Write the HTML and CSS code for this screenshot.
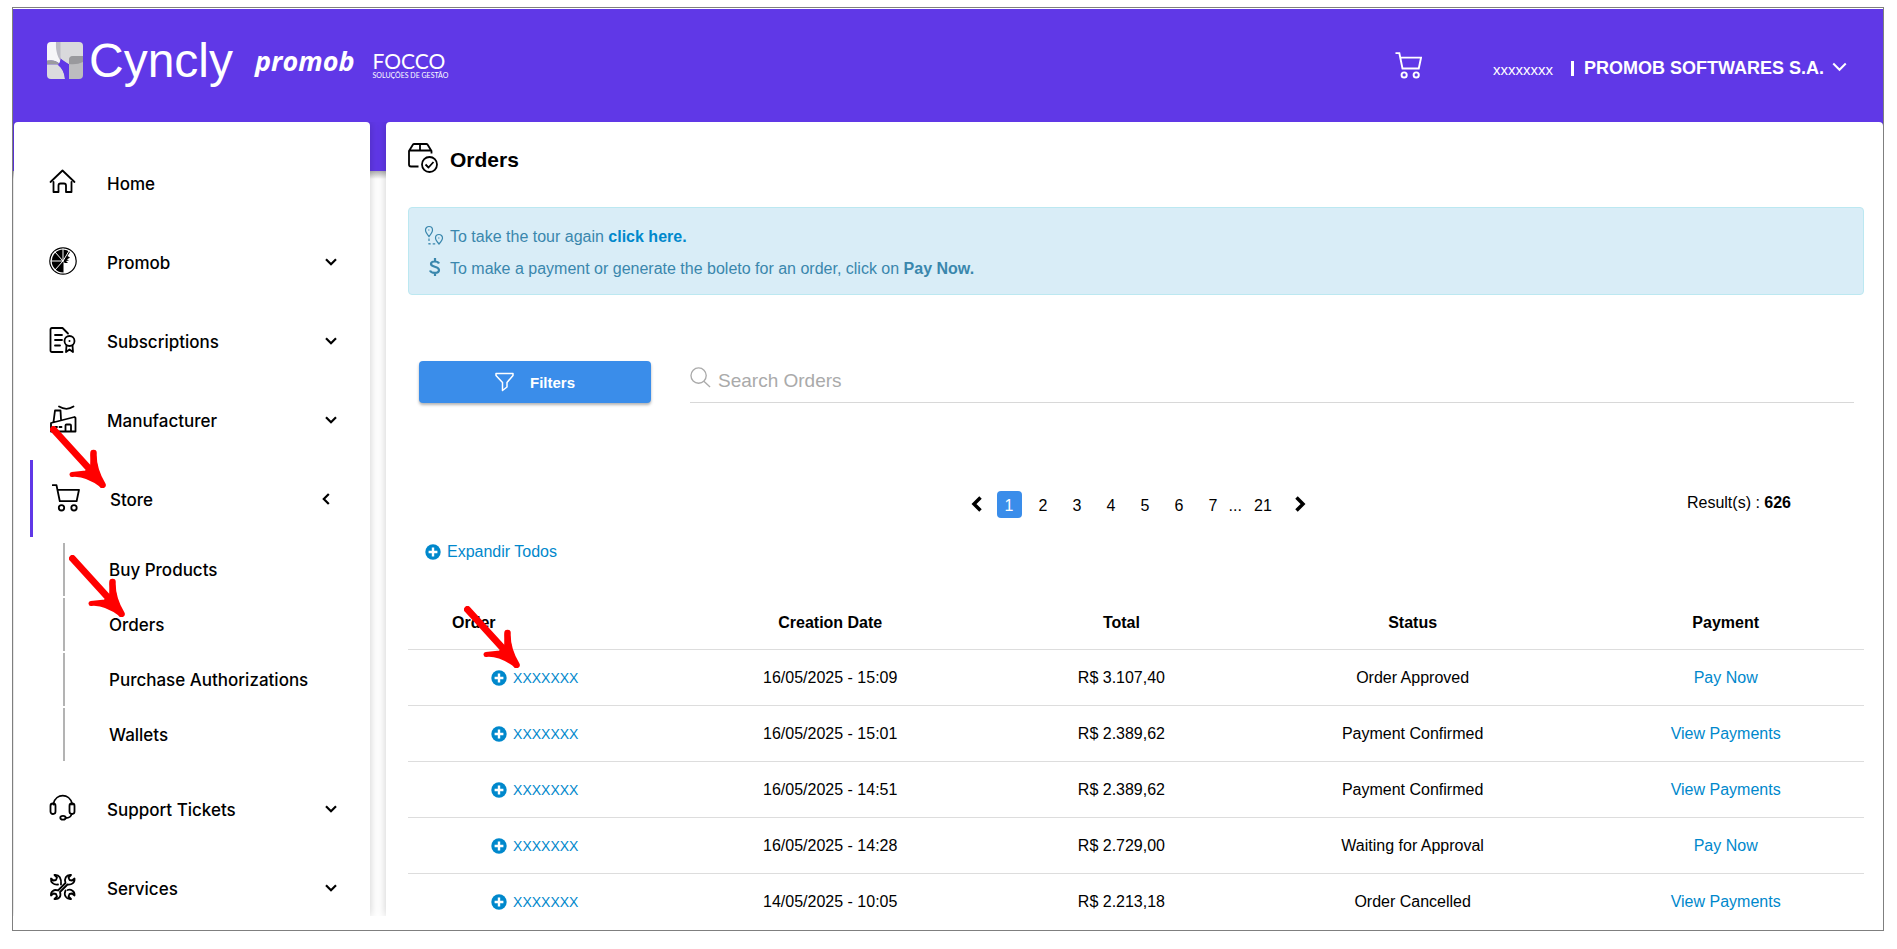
FILE: index.html
```html
<!DOCTYPE html>
<html lang="en">
<head>
    <meta charset="UTF-8">
    <meta name="viewport" content="width=device-width, initial-scale=1.0">
    <title>Orders</title>
    <link rel="stylesheet" href="styles.css">
</head>
<body>
    <!-- shared icons -->
    <svg class="sprite" aria-hidden="true">
        <symbol id="cart" viewBox="0 0 28 28">
            <path d="M0.5 1.2H4.5L7.8 17.2H24.6L27 5.8H5.6"/>
            <circle cx="9.5" cy="23.8" r="2.7"/>
            <circle cx="22" cy="23.8" r="2.7"/>
        </symbol>
        <symbol id="chevron" viewBox="0 0 12 8">
            <path d="M1 1.2L6 6.2L11 1.2"/>
        </symbol>
        <symbol id="plus" viewBox="0 0 16 16">
            <circle cx="8" cy="8" r="7.7"/>
            <path d="M8 3.6V12.4M3.6 8H12.4" stroke="#fff" stroke-width="2.4"/>
        </symbol>
        <symbol id="arrow" viewBox="0 0 56 62">
            <path d="M3.5 3.5L44 48" stroke-width="7" fill="none"/>
            <path d="M22 48.500C31 47.500 41 51 52.500 59.500C46.500 49 43.500 39 43.500 26.500L42.500 41L36 47Z" stroke-width="5"/>
            <path d="M43.500 27C43 37 45.500 47 52.500 59" stroke-width="6.500" fill="none"/>
        </symbol>
    </svg>

    <div class="frame">
        <header class="topbar">
            <div class="brand">
                <svg class="brand-icon" viewBox="0 0 36 37">
                    <path d="M4 0H13V12L13.500 22C8 18 4 18 0 19V4Q0 0 4 0Z" fill="#f6f6f8"/>
                    <path d="M9 0H32Q36 0 36 4V22H21C14 19 9 12 9 0Z" fill="#d9d9dc"/>
                    <path d="M9 0H13.500V19C10 14 8.500 7 9 0Z" fill="#bbbbc4"/>
                    <path d="M0 18.500C6 17.500 10 19 13 22.500H0Z" fill="#9a9a9f"/>
                    <path d="M0 22.500H10.500C15 26 17.500 31 18 37H4Q0 37 0 33Z" fill="#dbdbde"/>
                    <path d="M22 18Q22 14 26 14H36V33Q36 37 32 37H22Z" fill="#bcbcbf"/>
                    <path d="M22 18Q22 14 26 14H36V20Q30 23 22 22Z" fill="#99999d"/>
                    <path d="M14 17L21.500 22V37H18C17.500 31 15.500 26 11.500 23Z" fill="#6038e7"/>
                </svg>
                <span class="cyncly">Cyncly</span>
                <span class="promob">promob</span>
                <span class="focco">FOCCO<small>SOLUÇÕES DE GESTÃO</small></span>
            </div>
            <div class="account">
                <a href="#" class="cart-link" aria-label="Cart"><svg class="cart-icon"><use href="#cart"/></svg></a>
                <span class="user">xxxxxxxx</span>
                <button type="button" class="company">
                    <span class="divider"></span>
                    PROMOB SOFTWARES S.A.
                    <svg class="company-chevron"><use href="#chevron"/></svg>
                </button>
            </div>
        </header>

        <div class="page">
            <nav class="sidebar">
                <a href="#" class="item">
                    <svg class="item-icon" viewBox="0 0 28 28">
                        <path d="M1.500 14L13.500 2.500L25.500 14M4.500 14V24H9.500V17.500Q9.500 15.500 11.500 15.500H15Q17 15.500 17 17.500V24H22.500V14"/>
                    </svg>
                    <span class="item-text">Home</span>
                </a>
                <a href="#" class="item">
                    <svg class="item-icon" viewBox="0 0 28 28">
                        <circle cx="14" cy="14" r="13.200" stroke-width="1.200"/>
                        <path d="M14 14V2.500A11.500 11.500 0 0 1 21 5L18.500 9L21 10.500L18 12.500L20 13.500L17 14L19 16L16 16L14.500 15V25.500A11.500 11.500 0 0 1 14 2.500Z" fill="#000" stroke="none"/>
                        <path d="M14 14V2M14 14L20 4M14 14L6 5M14 14H2M14 14L6 23" stroke="#fff" stroke-width="1"/>
                    </svg>
                    <span class="item-text">Promob</span>
                    <svg class="item-chevron"><use href="#chevron"/></svg>
                </a>
                <a href="#" class="item">
                    <svg class="item-icon" viewBox="0 0 28 28">
                        <path d="M13.500 26H3Q1.500 26 1.500 24.500V3.500Q1.500 2 3 2H13.500L19 7.500M6 9H13M6 14H13M6 19.500H11"/>
                        <circle cx="20.500" cy="15" r="5"/>
                        <circle cx="20.500" cy="15" r="1" fill="#000" stroke="none"/>
                        <path d="M17.500 19.500L17 26L20.500 23.500L24 26L23.500 19.500"/>
                    </svg>
                    <span class="item-text">Subscriptions</span>
                    <svg class="item-chevron"><use href="#chevron"/></svg>
                </a>
                <a href="#" class="item">
                    <svg class="item-icon" viewBox="0 0 28 28">
                        <path d="M10 1.500C15 4.500 20 4.500 24.500 1.500M4.500 17L6 5.500H11.500L12 14.500M2 26.500V18L25.500 12L26.500 13V26.500Z"/>
                        <path d="M6 22H8M10.500 22H12.500M16.500 26V20.500Q16.500 19.500 17.500 19.500H21Q22 19.500 22 20.500V26"/>
                    </svg>
                    <span class="item-text">Manufacturer</span>
                    <svg class="item-chevron"><use href="#chevron"/></svg>
                </a>
                <a href="#" class="item active">
                    <svg class="item-icon"><use href="#cart"/></svg>
                    <span class="item-text">Store</span>
                    <svg class="item-chevron"><use href="#chevron"/></svg>
                    <svg class="arrow arrow-store"><use href="#arrow"/></svg>
                </a>
                <div class="submenu">
                    <a href="#" class="subitem">Buy Products</a>
                    <a href="#" class="subitem">Orders
                        <svg class="arrow arrow-orders"><use href="#arrow"/></svg>
                    </a>
                    <a href="#" class="subitem">Purchase Authorizations</a>
                    <a href="#" class="subitem">Wallets</a>
                </div>
                <a href="#" class="item">
                    <svg class="item-icon" viewBox="0 0 28 28">
                        <path d="M4.500 10.500V9.500C7 -1 20.500 -1 23 9.500V10.500M22.500 20Q22 24 16.500 24"/>
                        <rect x="1.500" y="9.500" width="5" height="10.500" rx="2.400"/>
                        <rect x="20.500" y="9.500" width="5" height="10.500" rx="2.400"/>
                        <ellipse cx="14" cy="23.800" rx="2.700" ry="1.900"/>
                    </svg>
                    <span class="item-text">Support Tickets</span>
                    <svg class="item-chevron"><use href="#chevron"/></svg>
                </a>
                <a href="#" class="item">
                    <svg class="item-icon" viewBox="0 0 28 28">
                        <path d="M9 17.500L16.500 10C15 6 17 1.500 22 2L19.500 4.500L20.500 7L23 7.500L25.500 5.500C26 10 22.500 12 18.500 11.500L11 19C12.500 23.500 10 26.500 5.500 26L8 23.500L7 21L4.500 20.500L2 22.500C1.500 18.500 5 16 9 17.500Z"/>
                        <path d="M12 11.500C12.500 5.500 10.500 1.500 5.500 2L8 4.500L7 7L4.500 7.500L2 5.500C1.500 9.500 4.500 12 9 11.500M16.500 17.500C14.500 22 17 26.500 22 26L19.500 23.500L20.500 21L23 20.500L25.500 22.500C26 18 22 16 18.500 17"/>
                    </svg>
                    <span class="item-text">Services</span>
                    <svg class="item-chevron"><use href="#chevron"/></svg>
                </a>
            </nav>

            <main class="panel">
                <h1 class="title">
                    <svg class="title-icon" viewBox="0 0 30 30">
                        <path d="M10.500 23.500H3Q1 23.500 1 21.500V8L5 1.500Q5.500 1 6 1H18.500Q19 1 19.500 1.500L23.500 8V10.500M1 7.500H23.500M12 1V7.500"/>
                        <circle cx="21.500" cy="21.500" r="7.500"/>
                        <path d="M17.500 21.500L20.500 24.500L25.500 19"/>
                    </svg>
                    Orders
                </h1>

                <div class="alert">
                    <p>
                        <svg class="alert-icon" viewBox="0 0 20 20" stroke-width="1.200">
                            <path d="M5 11.500C2 8 1.500 6.500 1.500 5A3.500 3.500 0 0 1 8.500 5C8.500 6.500 8 8 5 11.500ZM15 19C12 15.500 11.500 14.500 11.500 13A3.500 3.500 0 0 1 18.500 13C18.500 14.500 18 15.500 15 19Z"/>
                            <path d="M4.800 4.500V5.500M14.800 12.500V13.500"/>
                            <path d="M5 13.500V18.800H13" stroke-dasharray="2.500 2"/>
                        </svg>
                        <span>To take the tour again <a href="#">click here.</a></span>
                    </p>
                    <p>
                        <svg class="alert-icon" viewBox="0 0 20 20" stroke-width="2.200">
                            <path d="M15 6.500C14 4 7 3.500 7 7C7 10.500 15 9 15 13C15 17 7 16.500 6 13.500M11 1V4M11 16V19"/>
                        </svg>
                        <span>To make a payment or generate the boleto for an order, click on <b>Pay Now.</b></span>
                    </p>
                </div>

                <div class="tools">
                    <button type="button" class="filters">
                        <svg class="filters-icon" viewBox="0 0 19 20">
                            <path d="M1 1.500H18V3.500L12 10.500V15L7.500 18.500V10.500L1 3.500Z"/>
                        </svg>
                        Filters
                    </button>
                    <label class="search">
                        <svg class="search-icon" viewBox="0 0 22 22">
                            <circle cx="9" cy="9" r="8"/>
                            <path d="M14.500 15L21 21"/>
                        </svg>
                        <input type="text" placeholder="Search Orders" aria-label="Search Orders">
                    </label>
                </div>

                <div class="results">
                    <ul class="pagination">
                        <li class="prev"><a href="#" aria-label="Previous"><svg viewBox="0 0 11 16"><path d="M9.500 1.500L3 8L9.500 14.500"/></svg></a></li>
                        <li class="current"><a href="#">1</a></li>
                        <li><a href="#">2</a></li>
                        <li><a href="#">3</a></li>
                        <li><a href="#">4</a></li>
                        <li><a href="#">5</a></li>
                        <li><a href="#">6</a></li>
                        <li><a href="#">7</a></li>
                        <li class="dots">...</li>
                        <li><a href="#">21</a></li>
                        <li class="next"><a href="#" aria-label="Next"><svg viewBox="0 0 11 16"><path d="M1.500 1.500L8 8L1.500 14.500"/></svg></a></li>
                    </ul>
                    <p class="count">Result(s) : <b>626</b></p>
                </div>

                <a href="#" class="expand"><svg class="plus"><use href="#plus"/></svg>Expandir Todos</a>

                <table class="orders">
                    <thead>
                        <tr>
                            <th class="col-order">Order</th>
                            <th class="col-date">Creation Date</th>
                            <th class="col-total">Total</th>
                            <th class="col-status">Status</th>
                            <th class="col-payment">Payment</th>
                        </tr>
                    </thead>
                    <tbody>
                        <tr>
                            <td class="first"><a href="#" class="order"><svg class="plus"><use href="#plus"/></svg>XXXXXXX</a>
                                <svg class="arrow arrow-row"><use href="#arrow"/></svg></td>
                            <td>16/05/2025 - 15:09</td>
                            <td>R$ 3.107,40</td>
                            <td>Order Approved</td>
                            <td><a href="#">Pay Now</a></td>
                        </tr>
                        <tr>
                            <td><a href="#" class="order"><svg class="plus"><use href="#plus"/></svg>XXXXXXX</a></td>
                            <td>16/05/2025 - 15:01</td>
                            <td>R$ 2.389,62</td>
                            <td>Payment Confirmed</td>
                            <td><a href="#">View Payments</a></td>
                        </tr>
                        <tr>
                            <td><a href="#" class="order"><svg class="plus"><use href="#plus"/></svg>XXXXXXX</a></td>
                            <td>16/05/2025 - 14:51</td>
                            <td>R$ 2.389,62</td>
                            <td>Payment Confirmed</td>
                            <td><a href="#">View Payments</a></td>
                        </tr>
                        <tr>
                            <td><a href="#" class="order"><svg class="plus"><use href="#plus"/></svg>XXXXXXX</a></td>
                            <td>16/05/2025 - 14:28</td>
                            <td>R$ 2.729,00</td>
                            <td>Waiting for Approval</td>
                            <td><a href="#">Pay Now</a></td>
                        </tr>
                        <tr>
                            <td><a href="#" class="order"><svg class="plus"><use href="#plus"/></svg>XXXXXXX</a></td>
                            <td>14/05/2025 - 10:05</td>
                            <td>R$ 2.213,18</td>
                            <td>Order Cancelled</td>
                            <td><a href="#">View Payments</a></td>
                        </tr>
                    </tbody>
                </table>
            </main>
        </div>
    </div>
</body>
</html>
```
FILE: styles.css
```css
* {
    box-sizing: border-box;
}

body {
    margin: 0;
    background-color: #fff;
    color: #000;
    font-family: "Liberation Sans", Arial, sans-serif;
    font-size: 16px;
}

a {
    color: #0088cc;
    text-decoration: none;
}

p, h1, ul {
    margin: 0;
    padding: 0;
}

button {
    border: none;
    font-family: inherit;
    cursor: pointer;
}

svg {
    fill: none;
    stroke: currentColor;
    flex: none;
}

.sprite {
    position: absolute;
    width: 0;
    height: 0;
}

.frame {
    display: flex;
    flex-direction: column;
    height: calc(100vh - 25px);
    margin: 7px 13px 0 12px;
    padding: 1px 0 14px;
    border: 1px solid #7f7f7f;
}

/* top bar */
.topbar {
    display: flex;
    justify-content: space-between;
    height: 113px;
    padding: 0 36px 0 34px;
    background-color: #6038e7;
    color: #fff;
}

.brand {
    display: flex;
    align-items: center;
    padding-bottom: 10px;
}

.brand-icon {
    width: 36px;
    height: 37px;
    stroke: none;
}

.cyncly {
    margin-left: 6px;
    font-size: 48px;
}

.promob {
    margin-left: 22px;
    font-family: "Open Sans", sans-serif;
    font-size: 27px;
    font-weight: bold;
    font-style: italic;
}

.focco {
    margin-left: 18px;
    padding-top: 8px;
    font-family: Lato, sans-serif;
    font-size: 21px;
    line-height: 20px;
}

.focco small {
    display: block;
    font-size: 7px;
    line-height: 8px;
}

.account {
    display: flex;
    align-items: center;
    padding-top: 6px;
}

.cart-link {
    margin-bottom: 6px;
    color: #fff;
}

.cart-icon {
    display: block;
    width: 27px;
    height: 27px;
    stroke-width: 2;
}

.user {
    margin: 2px 18px 0 71px;
    font-size: 15px;
}

.company {
    display: flex;
    align-items: center;
    padding: 0;
    background: none;
    color: #fff;
    font-size: 18px;
    font-weight: bold;
}

.divider {
    width: 3px;
    height: 15px;
    margin-right: 10px;
    background-color: #fff;
}

.company-chevron {
    width: 15px;
    height: 10px;
    margin: 0 0 3px 8px;
    stroke-width: 1.6;
}

/* the purple band goes on behind the top of the panels */
.page {
    display: flex;
    flex: 1;
    gap: 16px;
    min-height: 0;
    padding-left: 1px;
    overflow: hidden;
    background: linear-gradient(#6038e7 49px, #b0b0b0 49px, #fff 57px);
}

.sidebar, .panel {
    background-color: #fff;
    border-radius: 4px 4px 0 0;
    box-shadow: 0 0 10px rgba(0, 0, 0, 0.2);
}

/* menu */
.sidebar {
    flex: none;
    width: 356px;
    padding-top: 21px;
    font-family: Inter, sans-serif;
    font-size: 17px;
    font-weight: 500;
}

.item {
    display: flex;
    align-items: center;
    height: 79px;
    padding: 0 33px 0 35px;
    color: #000;
}

.item-icon {
    width: 28px;
    height: 28px;
    margin-bottom: 2px;
    stroke-width: 1.8;
    stroke-linejoin: round;
    stroke-linecap: round;
}

.item-text {
    flex: 1;
    padding: 2px 0 0 30px;
}

.item-chevron {
    width: 12px;
    height: 8px;
    stroke-width: 2.2;
}

.item.active {
    position: relative;
    height: 77px;
    margin: 1px 0 1px 16px;
    padding: 0 38px 0 19px;
    border-left: 3px solid #6038e7;
}

.item.active .item-chevron {
    transform: rotate(90deg);
}

.submenu {
    padding: 5px 0 6px;
}

.subitem {
    position: relative;
    display: flex;
    align-items: center;
    height: 53px;
    margin: 0 0 2px 49px;
    padding-left: 44px;
    border-left: 2px solid #b3b3b3;
    color: #000;
}

/* red pointers */
.arrow {
    position: absolute;
    z-index: 2;
    width: 56px;
    height: 62px;
    color: #ff0000;
    fill: #ff0000;
    stroke-linecap: round;
    stroke-linejoin: round;
    pointer-events: none;
}

.arrow-store {
    left: 17px;
    top: -34px;
}

.arrow-orders {
    left: 4px;
    top: -43px;
}

.arrow-row {
    left: 56px;
    top: -44px;
}

/* orders */
.panel {
    flex: 1;
    min-width: 0;
    padding: 21px 19px 0 22px;
}

.title {
    display: flex;
    align-items: center;
    height: 34px;
    font-size: 21px;
    font-weight: bold;
}

.title-icon {
    width: 30px;
    height: 30px;
    margin: 0 12px 4px 0;
    stroke-width: 1.8;
    stroke-linejoin: round;
}

.alert {
    margin-top: 30px;
    padding: 13px 15px 9px;
    background-color: #d9edf7;
    border: 1px solid #bce8f1;
    border-radius: 4px;
    color: #3a87ad;
    line-height: 32px;
}

.alert p {
    display: flex;
    align-items: center;
}

.alert a {
    font-weight: bold;
}

.alert-icon {
    width: 20px;
    height: 20px;
    margin: 0 6px 4px 0;
}

.tools {
    display: flex;
    height: 42px;
    margin: 66px 10px 0 11px;
}

.filters {
    display: flex;
    align-items: center;
    justify-content: center;
    gap: 16px;
    width: 232px;
    background-color: #3a8dea;
    border-radius: 4px;
    box-shadow: 0 2px 3px rgba(0, 0, 0, 0.3);
    color: #fff;
    font-size: 15px;
    font-weight: bold;
}

.filters-icon {
    width: 19px;
    height: 20px;
    stroke-width: 1.5;
    stroke-linejoin: round;
}

.search {
    display: flex;
    flex: 1;
    align-items: center;
    margin-left: 39px;
    border-bottom: 1px solid #d8d8d8;
    color: #aaa;
}

.search-icon {
    width: 21px;
    height: 21px;
    margin-bottom: 8px;
    stroke-width: 1.4;
}

.search input {
    flex: 1;
    height: 40px;
    padding: 0 0 2px 7px;
    border: none;
    outline: none;
    font-family: inherit;
    font-size: 19px;
}

.search input::placeholder {
    color: #aaa;
    opacity: 1;
}

.results {
    display: grid;
    grid-template-columns: 1fr auto 1fr;
    margin-top: 88px;
    padding-left: 4px;
}

.pagination {
    display: flex;
    grid-column: 2;
    gap: 9px;
    list-style: none;
    line-height: 29px;
    text-align: center;
}

.pagination li {
    width: 25px;
    height: 27px;
}

.pagination a {
    display: block;
    color: #000;
}

.pagination .current {
    background-color: #3a8dea;
    border-radius: 4px;
}

.pagination .current a {
    color: #fff;
}

.pagination .dots {
    width: 13px;
    margin: 0 0 0 -6px;
}

.pagination .prev, .pagination .next {
    width: 11px;
}

.pagination .prev {
    margin-right: 6px;
}

.pagination .next {
    margin-left: 10px;
}

.pagination svg {
    display: block;
    width: 11px;
    height: 16px;
    margin-top: 5px;
    stroke-width: 3.5;
}

.count {
    padding-right: 73px;
    line-height: 24px;
    text-align: right;
}

.expand {
    display: flex;
    align-items: center;
    width: max-content;
    margin-top: 23px;
    padding-left: 17px;
    line-height: 22px;
}

.plus {
    width: 16px;
    height: 16px;
    margin-right: 6px;
    fill: #0088cc;
    stroke: none;
}

.orders {
    width: 100%;
    margin-top: 32px;
    border-collapse: collapse;
    table-layout: fixed;
    text-align: center;
}

.orders th, .orders td {
    height: 56px;
    padding: 2px 0 0;
    border-bottom: 1px solid #ddd;
}

.orders th {
    height: 54px;
}

.col-order {
    width: 17%;
}

.orders .col-order {
    padding-left: 44px;
    text-align: left;
}

.col-date, .col-status {
    width: 24%;
}

.col-total {
    width: 16%;
}

.col-payment {
    width: 19%;
}

.orders .first {
    position: relative;
}

.order {
    display: flex;
    align-items: center;
    justify-content: center;
    padding-left: 6px;
    font-size: 14px;
}
```
